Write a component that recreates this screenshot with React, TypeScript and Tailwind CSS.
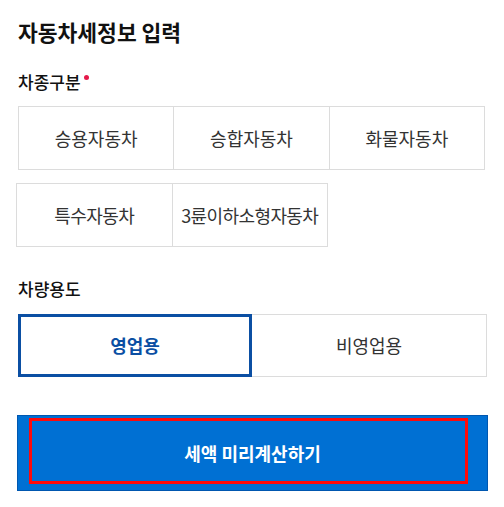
import React from "react";

const font = { fontFamily: '"Noto Sans CJK KR", "Noto Sans", sans-serif' };

export default function App() {
  const row1 = ["승용자동차", "승합자동차", "화물자동차"];
  const row2 = ["특수자동차", "3륜이하소형자동차"];
  return (
    <div className="w-[504px] h-[507px] bg-white pl-[18px] pt-[17px] overflow-hidden" style={font}>
      <h1 className="text-[21.5px] leading-[30px] font-bold text-[#111]">자동차세정보 입력</h1>

      <div className="mt-[23px] flex items-start text-[17px] leading-[24px] font-medium text-[#111]">
        <span>차종구분</span>
        <span className="ml-[3px] mt-[5px] w-[5px] h-[5px] rounded-full bg-[#e5194a]" />
      </div>

      <div className="mt-[12px] w-[467px] grid grid-cols-3 border-t border-l border-[#dcdcdc]">
        {row1.map((t) => (
          <div
            key={t}
            className="h-[63px] flex items-center justify-center border-r border-b border-[#dcdcdc] text-[18px] text-[#333]"
          >
            {t}
          </div>
        ))}
      </div>

      <div className="mt-[13px] -ml-[2px] w-[312px] grid grid-cols-2 border-t border-l border-[#dcdcdc]">
        {row2.map((t) => (
          <div
            key={t}
            className="h-[63px] flex items-center justify-center border-r border-b border-[#dcdcdc] text-[18px] text-[#333] tracking-[-0.6px] whitespace-nowrap"
          >
            {t}
          </div>
        ))}
      </div>

      <div className="mt-[30px] text-[17px] leading-[24px] font-medium text-[#111]">차량용도</div>

      <div className="mt-[13px] w-[469px] h-[63px] flex">
        <div className="w-[234px] h-full border-[3px] border-[#0b4fa3] flex items-center justify-center text-[18px] font-bold text-[#0b4fa3]">
          영업용
        </div>
        <div className="flex-1 h-full border-t border-r border-b border-[#dcdcdc] flex items-center justify-center text-[18px] text-[#333]">
          비영업용
        </div>
      </div>

      <div className="mt-[38px] -ml-px w-[471px] h-[76px] relative bg-[#0070d3] border border-[#0057b0] flex items-center justify-center text-[18px] font-bold text-white">
        세액 미리계산하기
        <div className="absolute left-[11px] top-[2px] w-[439px] h-[66px] border-[3px] border-[#ff0a0a]" />
      </div>
    </div>
  );
}
